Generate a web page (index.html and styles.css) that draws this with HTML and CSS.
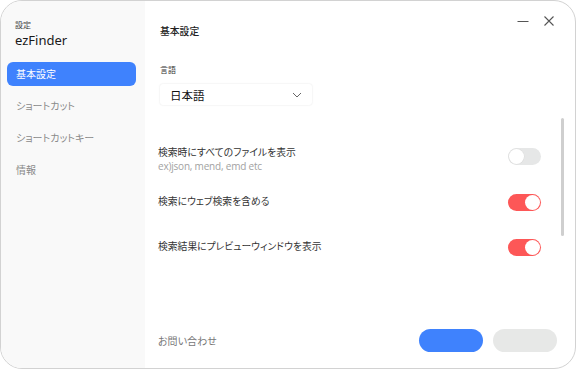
FILE: index.html
```html
<!DOCTYPE html>
<html lang="ja">
<head>
<meta charset="utf-8">
<link rel="stylesheet" href="styles.css">
</head>
<body>
<div class="window">
  <aside class="sidebar">
    <div class="app-caption">設定</div>
    <div class="app-name">ezFinder</div>
    <nav class="nav">
      <div class="nav-item active">基本設定</div>
      <div class="nav-item">ショートカット</div>
      <div class="nav-item">ショートカットキー</div>
      <div class="nav-item">情報</div>
    </nav>
  </aside>
  <main class="main">
    <div class="win-controls">
      <svg class="ctl" width="12" height="12" viewBox="0 0 12 12"><path d="M0.5 6.5h11" stroke="#555" stroke-width="1.1" fill="none"/></svg>
      <svg class="ctl" width="12" height="12" viewBox="0 0 12 12"><path d="M1.5 1.5l9 9M10.5 1.5l-9 9" stroke="#555" stroke-width="1.1" fill="none"/></svg>
    </div>
    <div class="scrollbar"></div>
    <h1 class="title">基本設定</h1>
    <div class="field-label">言語</div>
    <div class="select">
      <span>日本語</span>
      <svg width="10" height="6" viewBox="0 0 10 6"><path d="M1 1l4 4 4-4" stroke="#666" stroke-width="1" fill="none"/></svg>
    </div>
    <div class="rows">
      <div class="row row1">
        <div class="row-text">
          <div class="row-label">検索時にすべてのファイルを表示</div>
          <div class="row-sub">ex)json, mend, emd etc</div>
        </div>
        <div class="toggle off"><span class="knob"></span></div>
      </div>
      <div class="row row2">
        <div class="row-text"><div class="row-label">検索にウェブ検索を含める</div></div>
        <div class="toggle on"><span class="knob"></span></div>
      </div>
      <div class="row row3">
        <div class="row-text"><div class="row-label">検索結果にプレビューウィンドウを表示</div></div>
        <div class="toggle on"><span class="knob"></span></div>
      </div>
    </div>
    <footer class="footer">
      <div class="contact">お問い合わせ</div>
      <div class="buttons">
        <div class="btn primary"></div>
        <div class="btn secondary"></div>
      </div>
    </footer>
  </main>
</div>
</body>
</html>
```
FILE: styles.css
```css
html, body {
  margin: 0;
  padding: 0;
  background: #ffffff;
}
body {
  font-family: "Noto Sans CJK JP", "Noto Sans", sans-serif;
  font-feature-settings: "palt";
  width: 576px;
  height: 369px;
  overflow: hidden;
}
.window {
  box-sizing: border-box;
  width: 576px;
  height: 369px;
  border: 1px solid #d2d2d2;
  border-radius: 22px;
  overflow: hidden;
  display: flex;
  background: #fff;
}
.sidebar {
  width: 144px;
  flex: none;
  background: #f9f9f9;
  box-sizing: border-box;
  padding: 18px 9px 0 6px;
}
.app-caption {
  font-size: 8px;
  line-height: 12px;
  color: #444;
  padding-left: 8px;
}
.app-name {
  font-family: "Noto Sans", "Noto Sans CJK JP", sans-serif;
  font-size: 13px;
  line-height: 16px;
  color: #1a1a1a;
  padding-left: 8px;
  margin-top: 1px;
}
.nav {
  margin-top: 14px;
  display: flex;
  flex-direction: column;
  gap: 8px;
}
.nav-item {
  height: 24px;
  line-height: 24px;
  font-size: 10px;
  color: #8a8a8a;
  padding-left: 9px;
  border-radius: 6px;
}
.nav-item.active {
  background: #3f82fd;
  color: #fff;
}
.main {
  flex: 1;
  position: relative;
  box-sizing: border-box;
  padding: 0 0 0 15px;
  display: flex;
  flex-direction: column;
}
.win-controls {
  position: absolute;
  top: 14px;
  right: 20px;
  display: flex;
  gap: 14px;
}
.scrollbar {
  position: absolute;
  left: 416px;
  top: 117px;
  width: 3px;
  height: 118px;
  background: #cfcfcf;
  border-radius: 2px;
}
.title {
  margin: 22px 0 0;
  font-size: 9.8px;
  line-height: 16px;
  font-weight: 500;
  color: #222;
}
.field-label {
  margin-top: 25px;
  font-size: 8px;
  line-height: 12px;
  color: #333;
}
.select {
  margin-top: 8px;
  width: 152px;
  height: 21px;
  box-sizing: border-box;
  background: #fff;
  border-radius: 3px;
  box-shadow: 0 0 2px rgba(0,0,0,0.12);
  display: flex;
  align-items: center;
  justify-content: space-between;
  padding: 0 10px 0 10px;
  font-size: 11.5px;
  color: #111;
}
.rows {
  margin-left: -2px;
  margin-right: 34px;
}
.row {
  display: flex;
  align-items: flex-start;
  justify-content: space-between;
}
.row1 { margin-top: 40px; }
.row2 { margin-top: 21px; }
.row3 { margin-top: 28px; }
.row-label {
  font-size: 9.8px;
  line-height: 15px;
  color: #333;
}
.row-sub {
  font-family: "Open Sans", "Noto Sans", sans-serif;
  font-size: 10px;
  line-height: 13px;
  letter-spacing: -0.2px;
  color: #a2a2a2;
}
.toggle {
  width: 33px;
  height: 17px;
  border-radius: 9px;
  position: relative;
  box-sizing: border-box;
  flex: none;
}
.row1 .toggle { margin-top: 3px; }
.toggle.off { background: #e6e7e7; }
.toggle.on { background: #fd5757; }
.knob {
  position: absolute;
  top: 1px;
  width: 15px;
  height: 15px;
  border-radius: 50%;
  background: #fff;
}
.toggle.off .knob { left: 1px; box-shadow: 0 0 0 0.5px #dcdcdc; }
.toggle.on .knob { right: 1px; }
.footer {
  margin-top: auto;
  margin-bottom: 16px;
  margin-left: -2px;
  display: flex;
  align-items: center;
  justify-content: space-between;
  padding-right: 18px;
}
.contact {
  font-size: 10px;
  color: #777;
}
.buttons {
  display: flex;
  gap: 10px;
}
.btn {
  width: 64px;
  height: 23px;
  border-radius: 12px;
}
.btn.primary { background: #3f82fd; }
.btn.secondary { background: #e7e8e7; }
```
